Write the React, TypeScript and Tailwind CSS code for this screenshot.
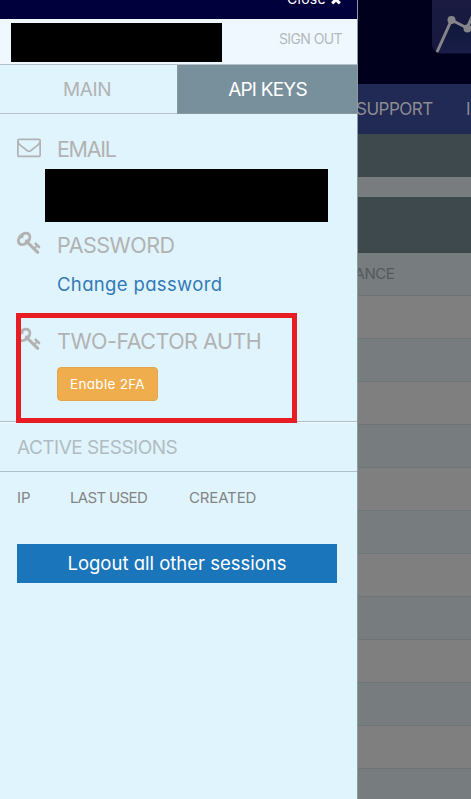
import React from 'react';

const KeyIcon: React.FC = () => (
  <svg width="25" height="25" viewBox="0 0 1792 1792" fill="currentColor">
    <path d="M832 512q0-80-56-136t-136-56-136 56-56 136q0 42 19 83-41-19-83-19-80 0-136 56t-56 136 56 136 136 56 136-56 56-136q0-42-19-83 41 19 83 19 80 0 136-56t56-136zm851 704q0 17-49 66t-66 49q-9 0-28.5-16t-36.5-33-38.5-40-24.5-26l-96 96 220 220q28 28 28 68 0 42-39 81t-81 39q-40 0-68-28l-671-671q-176 131-365 131-163 0-265.5-102.5t-102.5-265.5q0-160 95-313t248-248 313-95q163 0 265.5 102.5t102.5 265.5q0 189-131 365l355 355 96-96q-3-3-26-24.5t-40-38.5-33-36.5-16-28.5q0-17 49-66t66-49q13 0 23 10 6 6 46 44.5t82 79.5 86.5 86 73 78 28.5 41z" />
  </svg>
);

const EnvelopeIcon: React.FC = () => (
  <svg width="24" height="24" viewBox="0 0 1792 1792" fill="currentColor">
    <path d="M1664 1504v-768q-32 36-69 66-268 206-426 338-51 43-83 67t-86.500 48.500-102.500 24.500h-2q-48 0-102.500-24.500t-86.500-48.500-83-67q-158-132-426-338-37-30-69-66v768q0 13 9.500 22.500t22.500 9.500h1472q13 0 22.500-9.500t9.500-22.500zm0-1051v-24.500l-.5-13-3-12.500-5.500-9-9-7.500-14-2.500h-1472q-13 0-22.500 9.500t-9.500 22.500q0 168 147 284 193 152 401 317 6 5 35 29.500t46 37.500 44.500 31.500 50.500 27.500 43 9h2q20 0 43-9t50.500-27.500 44.500-31.500 46-37.500 35-29.500q208-165 401-317 54-43 100.500-115.500t46.500-131.500zm128-37v1088q0 66-47 113t-113 47h-1472q-66 0-113-47t-47-113v-1088q0-66 47-113t113-47h1472q66 0 113 47t47 113z" />
  </svg>
);

const CloseIcon: React.FC = () => (
  <svg width="14" height="14" viewBox="0 0 1792 1792" fill="currentColor">
    <path d="M1490 1322q0 40-28 68l-136 136q-28 28-68 28t-68-28l-294-294-294 294q-28 28-68 28t-68-28l-136-136q-28-28-28-68t28-68l294-294-294-294q-28-28-28-68t28-68l136-136q28-28 68-28t68 28l294 294 294-294q28-28 68-28t68 28l136 136q28 28 28 68t-28 68l-294 294 294 294q28 28 28 68z" />
  </svg>
);

interface SettingHeadingProps {
  icon: React.ReactNode;
  children: React.ReactNode;
}

const SettingHeading: React.FC<SettingHeadingProps> = ({ icon, children }) => (
  <div className="flex h-8 items-center pl-[17px] text-[#b2b2b2]">
    <div className="-mt-[5px] w-10 shrink-0">{icon}</div>
    <h3 className="text-[21.5px] leading-8 font-normal whitespace-nowrap">{children}</h3>
  </div>
);

const AccountDrawer: React.FC = () => (
  <aside className="flex h-[799px] w-[358px] shrink-0 flex-col border-r border-[#8b9ba3] bg-[#e0f4fd]">
    <div className="flex h-[19px] shrink-0 items-end justify-end overflow-hidden bg-[#00003c] pr-[14px] pb-[10px] text-white">
      <span className="mr-[3px] text-[14px] leading-5 tracking-[0.3px]">Close</span>
      <span className="mb-[3px]"><CloseIcon /></span>
    </div>

    <div className="flex h-[46px] shrink-0 justify-between border-b border-[#b5c1c8] bg-[#f0f8ff] pt-1 pr-[15px] pl-[11px]">
      <div className="h-[39px] w-[211px] bg-black" />
      <button className="h-8 pb-[2px] text-[14px] font-normal tracking-[-0.6px] text-[#b0babd]">SIGN OUT</button>
    </div>

    <div className="flex h-[49px] shrink-0 text-[19px]">
      <button className="w-[177px] border-b border-[#b9c5ca] pt-[2px] pr-[3px] font-normal text-[#b2b2b2]">
        <span className="tracking-[-0.4px]">MAIN</span>
      </button>
      <button className="flex-1 border-b border-l border-[#8b989d] bg-[#78909c] pt-[2px] text-white">
        <span className="tracking-[-0.8px]">API KEYS</span>
      </button>
    </div>

    <div className="flex h-[308px] shrink-0 flex-col border-b border-[#aebfc8] pt-[19px]">
      <SettingHeading icon={<EnvelopeIcon />}>
        <span className="tracking-[-1.3px]">EMAIL</span>
      </SettingHeading>
      <div className="mt-1 ml-[45px] h-[53px] w-[283px] bg-black" />

      <div className="mt-[7px]">
        <SettingHeading icon={<KeyIcon />}>
          <span className="tracking-[-0.5px]">PASSWORD</span>
        </SettingHeading>
      </div>
      <a href="#" className="mt-[9px] ml-[57px] text-[18.5px] leading-7 text-[#337ab7]">
        <span className="tracking-[0.35px]">Change password</span>
      </a>

      <div className="relative mt-[27px]">
        <SettingHeading icon={<KeyIcon />}>
          <span className="tracking-[-0.5px]">TWO-FACTOR AUTH</span>
        </SettingHeading>
        <button className="mt-[10px] ml-[57px] h-[34px] w-[101px] rounded-[4px] border border-[#e2a649] bg-[#f0ad4e] pt-[1px] text-[13.5px] tracking-[0.3px] text-white">
          Enable 2FA
        </button>
        {/* Highlight around the two-factor block */}
        <div className="pointer-events-none absolute -top-[12px] left-4 h-[110px] w-[281px] border-[5px] border-[#e81c24]" />
      </div>
    </div>

    <div className="h-[50px] shrink-0 border-t border-b border-t-[#f3faff] border-b-[#aebfc8] pl-[17px] text-[19px] leading-[49px] font-normal text-[#b0bcc2]">
      <span className="tracking-[-0.5px]">ACTIVE SESSIONS</span>
    </div>
    <div className="flex h-[72px] shrink-0 pt-[14px] pl-[17px] text-[15px] leading-6 font-normal text-[#848484]">
      <span className="w-[53px]">IP</span>
      <span className="w-[119px] tracking-[-0.65px]">LAST USED</span>
      <span className="tracking-[-0.15px]">CREATED</span>
    </div>
    <button className="ml-[17px] h-[39px] w-[320px] shrink-0 bg-[#1b75bb] text-[18.5px] text-white">
      Logout all other sessions
    </button>
  </aside>
);

const rows = Array.from({ length: 12 }, (_, i) => i);

const DimmedPage: React.FC = () => (
  <main className="flex h-[799px] min-w-0 flex-1 flex-col overflow-hidden bg-[#787c7f]">
    <div className="flex h-[84px] shrink-0 justify-end bg-[#00001c]">
      <svg width="40" height="54" viewBox="0 0 40 54">
        <defs>
          <linearGradient id="logo" x1="0" y1="0" x2="0" y2="1">
            <stop offset="0" stopColor="#1b1b42" />
            <stop offset="1" stopColor="#17193f" />
          </linearGradient>
          <linearGradient id="area" x1="0" y1="0" x2="0" y2="1">
            <stop offset="0" stopColor="#0c1736" />
            <stop offset="1" stopColor="#191d49" />
          </linearGradient>
        </defs>
        <rect x="1" y="-10" width="60" height="63.500" rx="9" fill="url(#logo)" />
        <path d="M7 51L21 20L36 28L42 15V53H8z" fill="url(#area)" />
        <path d="M6.500 51L20.500 20L36 28L42 15" fill="none" stroke="#858589" strokeWidth="3" strokeLinecap="round" />
        <circle cx="20.500" cy="20" r="4" fill="#858589" />
        <circle cx="36.500" cy="28.500" r="4" fill="#858589" />
      </svg>
    </div>
    <nav className="flex h-[50px] shrink-0 items-center bg-[#212955] pt-[1px] text-[17px] font-normal whitespace-nowrap text-[#8c8c90]">
      <span className="-ml-[2px] w-[110px] shrink-0 tracking-[-0.5px]">SUPPORT</span>
      <span className="shrink-0">INFO</span>
    </nav>
    <div className="h-[43px] shrink-0 bg-[#3e494e]" />
    <div className="h-5 shrink-0 bg-[#787c7f]" />
    <div className="h-14 shrink-0 bg-[#3e494e]" />
    <div className="flex h-[43px] shrink-0 items-center border-b border-[#707476] bg-[#777c7f] text-[15px] text-[#55595b]">
      <span className="-ml-[31px] tracking-[-0.4px]">BALANCE</span>
    </div>
    {rows.map((row) => (
      <div
        key={row}
        className={`h-[43px] shrink-0 border-b border-[#6f7579] ${row % 2 === 0 ? 'bg-[#7f7f7f]' : 'bg-[#777c7f]'}`}
      />
    ))}
  </main>
);

const App: React.FC = () => (
  <div className="flex h-[799px] w-[471px] overflow-hidden font-[Inter,sans-serif] [font-feature-settings:'cv11']">
    <AccountDrawer />
    <DimmedPage />
  </div>
);

export default App;
